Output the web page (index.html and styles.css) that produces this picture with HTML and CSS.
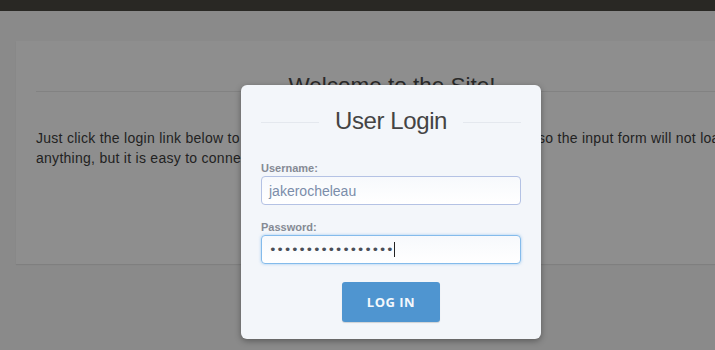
FILE: index.html
```html
<!DOCTYPE html>
<html>
<head>
<meta charset="utf-8">
<link rel="stylesheet" href="styles.css">
</head>
<body>
<div class="topbar"></div>
<div class="page">
  <div class="panel">
    <h1>Welcome to the Site!</h1>
    <p>Just click the login link below to open the modal window. This is only a demo, so the input form will not load<br>anything, but it is easy to connect the form to a backend script.</p>
  </div>
</div>
<div class="overlay">
  <div class="modal">
    <div class="modal-title"><span class="line"></span><h2>User Login</h2><span class="line"></span></div>
    <label class="lbl">Username:</label>
    <div class="field">jakerocheleau</div>
    <label class="lbl">Password:</label>
    <div class="field focus"><span class="dots">•••••••••••••••••</span><span class="caret"></span></div>
    <div class="btn-row"><button class="btn">LOG IN</button></div>
  </div>
</div>
</body>
</html>
```
FILE: styles.css
```css
html, body { margin: 0; padding: 0; }
body {
  width: 715px; height: 350px; overflow: hidden;
  background: #8a8a8a;
  font-family: "Liberation Sans", Arial, sans-serif;
  position: relative;
}
.topbar { height: 11px; background: #292824; }
.page { padding: 30px 0 0 16px; }
.panel {
  width: 699px; height: 223px;
  background: #8e8e8e;
  box-shadow: 0 1px 1px rgba(0,0,0,0.08);
  box-sizing: border-box;
  padding: 40px 0 0 20px;
  overflow: hidden;
}
.panel h1 {
  margin: 0; font-weight: normal; font-size: 22.5px; color: #2a2a2a;
  line-height: 10px; height: 10px;
  width: 712px; text-align: center; white-space: nowrap;
  border-bottom: 1px solid #828282;
}
.panel p {
  margin: 36px 0 0 0; font-size: 14px; line-height: 20px; color: #222;
  letter-spacing: 0.27px; white-space: nowrap;
}
.overlay { position: absolute; left: 241px; top: 85px; }
.modal {
  width: 300px; height: 254px; box-sizing: border-box;
  background: #f3f6fa; border-radius: 6px;
  box-shadow: 0 2px 6px rgba(0,0,0,0.35);
  padding: 20px 20px 0 20px;
}
.modal-title { display: flex; align-items: center; gap: 14px; height: 32px; }
.modal-title .line { flex: 1; height: 1px; background: #e4e8ee; margin-top: 3px; }
.modal-title h2 {
  margin: 0; font-weight: normal; font-size: 24px; color: #444;
  letter-spacing: -0.4px; padding: 0 2px;
}
.lbl {
  display: block; font-size: 11px; font-weight: bold;
  color: #858a94; line-height: 13px;
}
.modal-title + .lbl { margin-top: 25px; }
.field + .lbl { margin-top: 16px; }
.lbl + .field { margin-top: 1px; }
.field {
  height: 29px; box-sizing: border-box; border: 1px solid #b4c2e4; border-radius: 4px;
  background: linear-gradient(#f7f9fc, #fff);
  padding: 0 7px; font-size: 14px; color: #7b8daa;
  display: flex; align-items: center;
}
.field.focus {
  border-color: #84bbeb;
  box-shadow: 0 0 3px rgba(100,170,235,0.6);
  color: #4a4f58;
}
.dots { font-family: "DejaVu Sans", sans-serif; font-size: 13px; letter-spacing: -0.35px; }
.caret { width: 1px; height: 15px; background: #222; margin-left: 1px; }
.btn-row { display: flex; justify-content: center; margin-top: 18px; }
.btn {
  width: 98px; height: 40px; border: none; border-radius: 3px;
  background: #4f95d0; color: #f4f8fc; font-weight: bold; font-size: 13px;
  font-family: "Open Sans", "Liberation Sans", sans-serif; letter-spacing: 0.5px;
  box-shadow: 0 1px 1px rgba(0,0,0,0.15);
}
```
